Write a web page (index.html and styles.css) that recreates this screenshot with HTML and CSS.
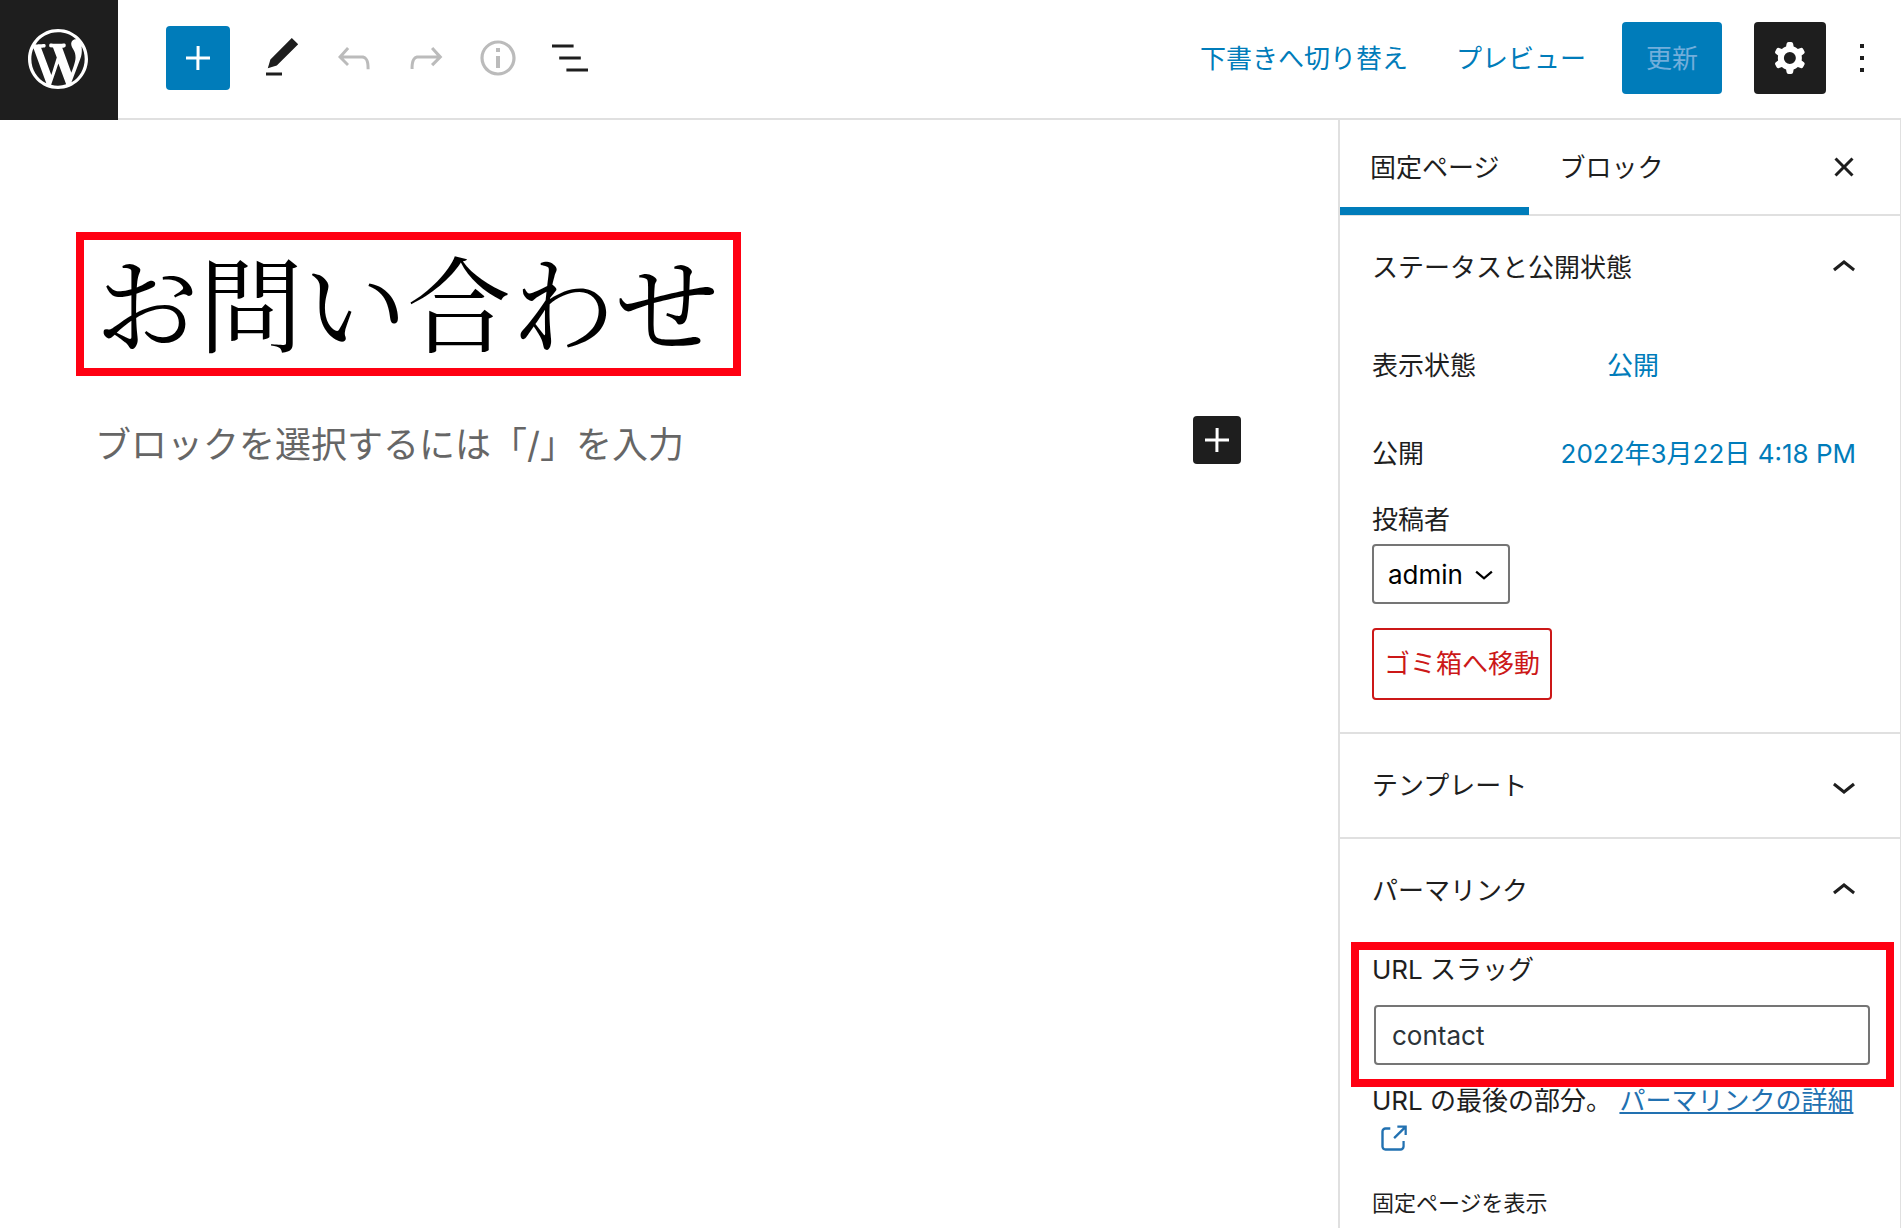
FILE: index.html
```html
<!DOCTYPE html>
<html lang="ja">
<head>
<meta charset="utf-8">
<meta name="viewport" content="width=device-width, initial-scale=1">
<title>お問い合わせ</title>
<link rel="stylesheet" href="styles.css">
</head>
<body>
<header class="header">
  <a class="logo" href="#" aria-label="WordPress">
    <svg class="logo-icon" viewBox="-2 -2 24 24"><path d="M20 10c0-5.51-4.49-10-10-10C4.48 0 0 4.49 0 10c0 5.52 4.48 10 10 10 5.51 0 10-4.48 10-10zM7.78 15.37L4.37 6.22c.55-.02 1.17-.08 1.17-.08.5-.06.44-1.13-.06-1.11 0 0-1.45.11-2.37.11-.18 0-.37 0-.58-.01C4.12 2.69 6.87 1.11 10 1.11c2.33 0 4.45.87 6.05 2.34-.68-.11-1.65.39-1.65 1.58 0 .74.45 1.36.9 2.1.35.61.55 1.36.55 2.46 0 1.49-1.4 5-1.4 5l-3.03-8.37c.54-.02.82-.17.82-.17.5-.05.44-1.25-.06-1.22 0 0-1.44.12-2.38.12-.87 0-2.33-.12-2.33-.12-.5-.03-.56 1.2-.06 1.22l.92.08 1.26 3.41zM17.41 10c.24-.64.74-1.87.43-4.25.7 1.29 1.05 2.71 1.05 4.25 0 3.29-1.73 6.24-4.4 7.78.97-2.59 1.94-5.2 2.92-7.78zM6.1 18.09C3.12 16.65 1.11 13.53 1.11 10c0-1.3.23-2.48.72-3.59C3.25 10.3 4.67 14.2 6.1 18.09zm4.03-6.63l2.58 6.98c-.86.29-1.76.45-2.71.45-.79 0-1.57-.11-2.29-.33.81-2.38 1.62-4.74 2.42-7.1z"/></svg>
  </a>
  <div class="tools">
    <button class="add" type="button" aria-label="ブロックを追加"><svg class="icon" viewBox="0 0 24 24"><path d="M18 11.2h-5.2V6h-1.5v5.2H6v1.5h5.2V18h1.5v-5.2H18z"/></svg></button>
    <div class="tool-group">
      <button class="icon-button" type="button" aria-label="ツール"><svg class="icon" viewBox="0 0 24 24"><path d="M20.1 5.1L16.9 2 6.2 12.7l-1.3 4.4 4.5-1.3L20.1 5.1zM4 20.8h8v-1.5H4v1.5z"/></svg></button>
      <button class="icon-button" type="button" disabled aria-label="元に戻す"><svg class="icon" viewBox="0 0 24 24"><path d="M18.3 11.7c-.6-.6-1.4-.9-2.3-.9H6.7l2.9-3.3-1.1-1-4.5 5L8.5 16l1-1-2.7-2.7H16c.5 0 .9.2 1.3.5 1 1 1 3.4 1 4.5v.3h1.5v-.2c0-1.5 0-4.3-1.5-5.7z"/></svg></button>
      <button class="icon-button" type="button" disabled aria-label="やり直す"><svg class="icon" viewBox="0 0 24 24"><path d="M15.6 6.5l-1.1 1 2.9 3.3H8c-.9 0-1.7.3-2.3.9-1.4 1.5-1.4 4.2-1.4 5.6v.2h1.5v-.3c0-1.1 0-3.5 1-4.5.3-.3.7-.5 1.3-.5h9.2L14.5 15l1.1 1.1 4.6-4.6-4.6-5z"/></svg></button>
      <button class="icon-button" type="button" disabled aria-label="詳細"><svg class="icon" viewBox="0 0 24 24"><path d="M12 3.2c-4.8 0-8.8 3.9-8.8 8.8 0 4.8 3.9 8.8 8.8 8.8 4.8 0 8.8-3.9 8.8-8.8 0-4.8-4-8.8-8.8-8.8zm0 16c-4 0-7.2-3.3-7.2-7.2C4.8 8 8 4.8 12 4.8s7.2 3.3 7.2 7.2c0 4-3.2 7.2-7.2 7.2zM11 17h2v-6h-2v6zm0-8h2V7h-2v2z"/></svg></button>
      <button class="icon-button" type="button" aria-label="リスト表示"><svg class="icon" viewBox="0 0 24 24"><path d="M13.8 5.2H3v1.5h10.8V5.2zm-3.6 12v1.5H21v-1.5H10.2zm7.2-6H6.6v1.5h10.8v-1.5z"/></svg></button>
    </div>
  </div>
  <div class="actions">
    <button class="text-button" type="button">下書きへ切り替え</button>
    <button class="text-button" type="button">プレビュー</button>
    <button class="update" type="button" disabled>更新</button>
    <div class="action-group">
      <button class="icon-button settings" type="button" aria-label="設定"><svg class="icon" viewBox="0 0 24 24"><path fill-rule="evenodd" d="M10.289 4.836A1 1 0 0111.275 4h1.306a1 1 0 01.987.836l.244 1.466c.787.26 1.503.679 2.108 1.218l1.393-.522a1 1 0 011.216.437l.653 1.13a1 1 0 01-.23 1.273l-1.148.944a6.025 6.025 0 010 2.435l1.149.946a1 1 0 01.23 1.272l-.653 1.13a1 1 0 01-1.216.437l-1.394-.522c-.605.54-1.32.958-2.108 1.218l-.244 1.466a1 1 0 01-.987.836h-1.306a1 1 0 01-.986-.836l-.244-1.466a5.995 5.995 0 01-2.108-1.218l-1.394.522a1 1 0 01-1.217-.436l-.653-1.131a1 1 0 01.23-1.272l1.149-.946a6.026 6.026 0 010-2.435l-1.148-.944a1 1 0 01-.23-1.272l.653-1.131a1 1 0 011.217-.437l1.393.522a5.994 5.994 0 012.108-1.218l.244-1.466zM14.929 12a3 3 0 11-6 0 3 3 0 016 0z"/></svg></button>
      <button class="icon-button" type="button" aria-label="オプション"><svg class="icon" viewBox="0 0 24 24"><path d="M13 19h-2v-2h2v2zm0-6h-2v-2h2v2zm0-6h-2V5h2v2z"/></svg></button>
    </div>
  </div>
</header>
<div class="body">
  <main class="canvas">
    <div class="title-box"><h1 class="title">お問い合わせ</h1></div>
    <div class="block-row">
      <p class="prompt">ブロックを選択するには「/」を入力</p>
      <button class="inserter" type="button" aria-label="ブロックを追加"><svg class="icon" viewBox="0 0 24 24"><path d="M18 11.2h-5.2V6h-1.5v5.2H6v1.5h5.2V18h1.5v-5.2H18z"/></svg></button>
    </div>
  </main>
  <aside class="sidebar">
    <div class="tabs">
      <button class="tab tab-active" type="button">固定ページ</button>
      <button class="tab" type="button">ブロック</button>
      <button class="close" type="button" aria-label="設定を閉じる"><svg class="icon" viewBox="0 0 24 24"><path d="M12 13.06l3.712 3.713 1.061-1.06L13.061 12l3.712-3.712-1.06-1.06L12 10.938 8.288 7.227l-1.061 1.06L10.939 12l-3.712 3.712 1.06 1.061L12 13.061z"/></svg></button>
    </div>
    <section class="panel">
      <h2 class="panel-title"><button class="panel-toggle" type="button" aria-expanded="true">ステータスと公開状態<svg class="icon" viewBox="0 0 24 24"><path d="M6.5 12.4L12 8l5.5 4.4-.9 1.2L12 10l-4.5 3.6-1-1.2z"/></svg></button></h2>
      <div class="status">
        <div class="row"><span class="row-label">表示状態</span><button class="text-button row-value" type="button">公開</button></div>
        <div class="row"><span>公開</span><button class="text-button" type="button">2022年3月22日 4:18 PM</button></div>
        <div class="author">
          <label for="author">投稿者</label>
          <div class="select-box">
            <select class="select" id="author"><option>admin</option></select>
            <svg class="select-icon" viewBox="0 0 16 16"><path d="M1 5l7 6 7-6"/></svg>
          </div>
        </div>
        <button class="trash" type="button">ゴミ箱へ移動</button>
      </div>
    </section>
    <section class="panel">
      <h2 class="panel-title"><button class="panel-toggle" type="button" aria-expanded="false">テンプレート<svg class="icon" viewBox="0 0 24 24"><path d="M17.5 11.6L12 16l-5.5-4.4.9-1.2L12 14l4.5-3.6 1 1.2z"/></svg></button></h2>
    </section>
    <section class="panel">
      <h2 class="panel-title"><button class="panel-toggle" type="button" aria-expanded="true">パーマリンク<svg class="icon" viewBox="0 0 24 24"><path d="M6.5 12.4L12 8l5.5 4.4-.9 1.2L12 10l-4.5 3.6-1-1.2z"/></svg></button></h2>
      <div class="slug-box">
        <label for="slug">URL スラッグ</label>
        <input class="slug" id="slug" type="text" value="contact">
      </div>
      <p class="help">URL の最後の部分。 <a class="help-link" href="#">パーマリンクの詳細<svg class="external" viewBox="0 0 24 24"><path d="M18.2 17c0 .7-.6 1.2-1.2 1.2H7c-.7 0-1.2-.6-1.2-1.2V7c0-.7.6-1.2 1.2-1.2h3.2V4.2H7C5.5 4.2 4.2 5.5 4.2 7v10c0 1.5 1.2 2.8 2.8 2.8h10c1.5 0 2.8-1.2 2.8-2.8v-3.6h-1.5V17zM14.9 3v1.5h3.7l-6.4 6.4 1.1 1.1 6.4-6.4v3.7h1.5V3h-6.3z"/></svg></a></p>
      <p class="view">固定ページを表示</p>
    </section>
  </aside>
</div>
</body>
</html>
```
FILE: styles.css
```css
* {
  box-sizing: border-box;
}

body {
  display: flex;
  flex-direction: column;
  min-height: 100vh;
  margin: 0;
  background: #fff;
  color: #1e1e1e;
  font: 26px/36px Inter, "Noto Sans CJK JP", sans-serif;
}

button,
input,
select {
  margin: 0;
  padding: 0;
  border: 0;
  background: none;
  color: inherit;
  font: inherit;
}

h1,
h2,
p {
  margin: 0;
  font-weight: 400;
}

svg {
  display: block;
  fill: currentColor;
}

.icon {
  flex: none;
  width: 48px;
  height: 48px;
}

/* Top bar */
.header {
  display: flex;
  height: 120px;
  border-bottom: 2px solid #e0e0e0;
}

.logo {
  display: grid;
  place-items: center;
  width: 118px;
  height: 120px;
  padding: 0 2px 2px 0;
  background: #1e1e1e;
  color: #fff;
}

.logo-icon {
  width: 72px;
  height: 72px;
}

.tools {
  display: flex;
  align-items: center;
  gap: 16px;
  padding: 0 0 2px 48px;
}

.tool-group,
.action-group {
  display: flex;
}

.add,
.icon-button,
.inserter {
  display: grid;
  place-items: center;
  border-radius: 4px;
}

.add {
  width: 64px;
  height: 64px;
  background: #007cba;
  color: #fff;
}

.icon-button {
  width: 72px;
  height: 72px;
}

.icon-button:disabled {
  color: #bbb;
}

.actions {
  display: flex;
  align-items: center;
  margin-left: auto;
  padding: 0 3px 2px 0;
}

.text-button {
  color: #007cba;
}

.actions .text-button {
  padding: 2px 24px 0;
}

.update {
  height: 72px;
  margin: 0 32px 0 12px;
  padding: 2px 24px 0;
  border-radius: 4px;
  background: #007cba;
  color: #72aedb;
}

.settings {
  background: #1e1e1e;
  color: #fff;
}

/* Editing area */
.body {
  display: flex;
  flex: 1;
}

.canvas {
  flex: 1;
  padding: 112px 97px 0 76px;
}

.title-box {
  width: fit-content;
  padding: 0 14px 8px 11px;
  border: 8px solid #ff0012;
}

.title {
  color: #000;
  font: 400 104px/120px "Noto Serif CJK JP", "Noto Sans CJK JP", serif;
}

.block-row {
  display: flex;
  align-items: flex-start;
  justify-content: space-between;
  margin-top: 40px;
  padding-left: 19px;
}

.prompt {
  padding-top: 5px;
  color: #666;
  font-size: 36px;
  line-height: 48px;
}

.inserter {
  width: 48px;
  height: 48px;
  background: #1e1e1e;
  color: #fff;
}

/* Settings sidebar */
.sidebar {
  flex: none;
  width: 563px;
  border: solid #e0e0e0;
  border-width: 0 1px 0 2px;
}

.tabs {
  display: flex;
  height: 96px;
  padding-right: 32px;
  border-bottom: 2px solid #e0e0e0;
}

.tab {
  height: 95px;
  padding: 0 30px;
}

.tab-active {
  box-shadow: inset 0 -8px #007cba;
}

.close {
  margin-left: auto;
}

.panel {
  padding: 0 30px 0 32px;
}

.panel + .panel {
  border-top: 2px solid #e0e0e0;
}

.panel-title {
  font-size: 26px;
}

.panel-toggle {
  display: flex;
  align-items: center;
  justify-content: space-between;
  width: 100%;
  height: 103px;
  padding-right: 2px;
}

.status {
  display: flex;
  flex-direction: column;
  align-items: flex-start;
  gap: 16px;
  padding: 11px 14px 32px 0;
}

.row {
  display: flex;
  align-items: center;
  justify-content: space-between;
  width: 100%;
  height: 72px;
}

.row-label {
  width: 235px;
}

.row-value {
  margin-right: auto;
}

.author {
  margin: -4px 0 8px;
}

.author label,
.slug-box label {
  display: block;
}

.select-box {
  display: grid;
  align-items: center;
  width: fit-content;
  margin-top: 6px;
}

.select,
.select-icon {
  grid-area: 1 / 1;
}

.select {
  height: 60px;
  padding: 2px 45px 0 14px;
  border: 2px solid #757575;
  border-radius: 4px;
  color: #000;
  appearance: none;
}

.select-icon {
  justify-self: end;
  width: 18px;
  height: 18px;
  margin: 2px 17px 0 0;
  fill: none;
  stroke: #000;
  stroke-width: 2;
  pointer-events: none;
}

.trash {
  height: 72px;
  padding: 0 10px;
  border: 2px solid #cc1818;
  border-radius: 4px;
  color: #cc1818;
}

.slug-box {
  margin: 0 -24px -4px -21px;
  padding: 2px 16px 14px 15px;
  border: 8px solid #ff0012;
}

.slug-box label {
  margin-left: -2px;
}

.slug {
  display: block;
  width: 100%;
  height: 60px;
  margin-top: 17px;
  padding: 0 16px;
  border: 2px solid #757575;
  border-radius: 4px;
  color: #2c3338;
}

.help {
  line-height: 36px;
}

.help-link {
  color: #2271b1;
}

.external {
  display: inline-block;
  width: 36px;
  height: 36px;
  margin-left: 3px;
  vertical-align: middle;
}

.view {
  margin-top: 28px;
  font-size: 22px;
}
```
